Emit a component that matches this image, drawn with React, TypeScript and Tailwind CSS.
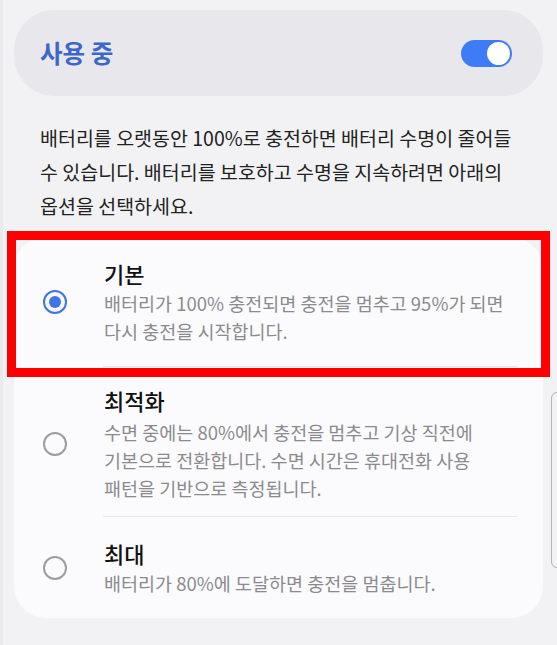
import type { ReactNode } from "react"

const FONT = "font-['Noto_Sans_CJK_KR','Noto_Sans',sans-serif]"

type Option = {
  title: string
  lines: string[]
  selected?: boolean
  pad: string
  gap: string
  divider?: boolean
}

const OPTIONS: Option[] = [
  {
    title: "기본",
    lines: ["배터리가 100% 충전되면 충전을 멈추고 95%가 되면", "다시 충전을 시작합니다."],
    selected: true,
    pad: "pt-[21px] pb-[21px]",
    gap: "mt-[1px]",
    divider: true,
  },
  {
    title: "최적화",
    lines: [
      "수면 중에는 80%에서 충전을 멈추고 기상 직전에",
      "기본으로 전환합니다. 수면 시간은 휴대전화 사용",
      "패턴을 기반으로 측정됩니다.",
    ],
    pad: "pt-[18px] pb-[14px]",
    gap: "mt-[3px]",
    divider: true,
  },
  {
    title: "최대",
    lines: ["배터리가 80%에 도달하면 충전을 멈춥니다."],
    pad: "pt-[21px] pb-[21px]",
    gap: "mt-[1px]",
  },
]

function Radio({ on }: { on?: boolean }) {
  if (on) {
    return (
      <div className="w-[24px] h-[24px] rounded-full border-[2.5px] border-[#3f74e8] flex items-center justify-center shrink-0">
        <div className="w-[12px] h-[12px] rounded-full bg-[#3f74e8]" />
      </div>
    )
  }
  return <div className="w-[24px] h-[24px] rounded-full border-[2px] border-[#9d9d9f] shrink-0" />
}

function Row({ opt }: { opt: Option }): ReactNode {
  return (
    <div>
      <div className={`flex items-center ${opt.pad}`}>
        <div className="w-[90px] pl-[29px] flex items-center">
          <Radio on={opt.selected} />
        </div>
        <div>
          <div className="text-[22px] leading-[30px] text-[#121212] font-medium">{opt.title}</div>
          <div className={`${opt.gap} text-[18.5px] leading-[28px] text-[#8b8b8d] whitespace-nowrap`}>
            {opt.lines.map((l) => (
              <div key={l}>{l}</div>
            ))}
          </div>
        </div>
      </div>
      {opt.divider && <div className="ml-[89px] mr-[26px] h-px bg-[#e6e6e8]" />}
    </div>
  )
}

export default function App() {
  return (
    <div className={`${FONT} relative w-[557px] h-[645px] overflow-hidden bg-[#f2f2f4] pt-[10px]`}>
      {/* left edge strip */}
      <div className="absolute left-0 top-0 w-[3px] h-full bg-[#eaeaec]" />

      {/* master switch */}
      <div className="mx-[14px] h-[86px] rounded-[40px] bg-[#e8e8ec] flex items-center justify-between pl-[26px] pr-[31px]">
        <span className="text-[24.5px] font-bold text-[#3c66c9]">사용 중</span>
        <div className="w-[51px] h-[27px] rounded-full bg-[#3e7cf6] flex items-center justify-end pr-[2px]">
          <div className="w-[23px] h-[23px] rounded-full bg-white" />
        </div>
      </div>

      {/* description */}
      <div className="mt-[25px] pl-[40px] text-[19.5px] leading-[34px] text-[#222222] whitespace-nowrap">
        <div>배터리를 오랫동안 100%로 충전하면 배터리 수명이 줄어들</div>
        <div>수 있습니다. 배터리를 보호하고 수명을 지속하려면 아래의</div>
        <div>옵션을 선택하세요.</div>
      </div>

      {/* options */}
      <div className="mt-[14px] mx-[14px] rounded-[32px] bg-[#fbfbfd]">
        {OPTIONS.map((o) => (
          <Row key={o.title} opt={o} />
        ))}
      </div>

      {/* highlight frame */}
      <div className="absolute left-[7px] top-[231px] w-[543px] h-[146px] border-[9px] border-[#ff0000]" />

      {/* scrollbar */}
      <div className="absolute left-[551px] top-[392px] w-[14px] h-[176px] rounded-[6px] border border-[#b4b4b6]" />
    </div>
  )
}
